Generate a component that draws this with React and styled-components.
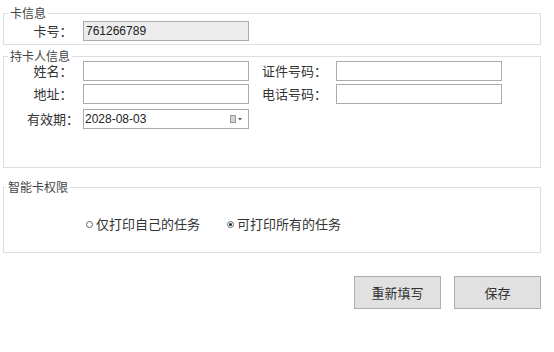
import React, { useState } from "react";
import styled, { createGlobalStyle } from "styled-components";

const GlobalStyle = createGlobalStyle`
  body {
    margin: 0;
    background: #fff;
    font-family: "Noto Sans CJK SC", "Noto Sans", sans-serif;
    color: #333;
  }
`;

const Page = styled.div`
  width: 554px;
  height: 352px;
  box-sizing: border-box;
  padding: 13px 0 0 3px;
  background: #fff;
`;

const Group = styled.div`
  width: 538px;
  box-sizing: border-box;
  border: 1px solid #dedede;
  margin-top: ${(p) => p.$gap || 0}px;
`;

const GroupTitle = styled.div`
  width: fit-content;
  margin: -7px 0 -5px ${(p) => p.$indent ?? 4}px;
  padding: 0 2px;
  background: #fff;
  font-size: 12px;
  line-height: 12px;
  height: 12px;
  color: #444;
`;

const GroupBody = styled.div`
  padding: ${(p) => p.$pad};
`;

const FormGrid = styled.div`
  display: grid;
  grid-template-columns: 60px 166px 87px 166px;
  grid-auto-rows: auto;
  row-gap: 3px;
`;

const Label = styled.div`
  font-size: 13px;
  line-height: 20px;
  height: 20px;
  text-align: center;
  white-space: nowrap;
  padding-left: ${(p) => (p.$wide ? 4 : 0)}px;
  color: #333;
`;

const TextInput = styled.input`
  width: 100%;
  height: 20px;
  box-sizing: border-box;
  margin: 0;
  border: 1px solid #ababab;
  padding: 0 2px;
  font-family: "Liberation Sans", Arial, sans-serif;
  font-size: 12px;
  color: #222;
  background: ${(p) => (p.readOnly ? "#ececec" : "#fff")};
  outline: none;
`;

const DateRow = styled.div`
  grid-column: 1 / 3;
  display: grid;
  grid-template-columns: 60px 166px;
  margin-top: 2px;
`;

const DateBox = styled.div`
  height: 20px;
  box-sizing: border-box;
  border: 1px solid #ababab;
  padding: 0 6px 0 1px;
  display: flex;
  align-items: center;
  justify-content: space-between;
  font-family: "Liberation Sans", Arial, sans-serif;
  font-size: 12px;
  color: #222;
`;

const RadioRow = styled.div`
  display: flex;
  align-items: center;
  gap: 27px;
  height: 14px;
`;

const RadioItem = styled.label`
  display: flex;
  align-items: center;
  gap: 3px;
  font-size: 13px;
  line-height: 14px;
  color: #333;
  cursor: pointer;
`;

const RadioDot = styled.span`
  width: 7px;
  height: 7px;
  box-sizing: border-box;
  border: 1px solid #666;
  border-radius: 50%;
  display: flex;
  align-items: center;
  justify-content: center;
  &::after {
    content: "";
    width: 3px;
    height: 3px;
    border-radius: 50%;
    background: ${(p) => (p.$checked ? "#222" : "transparent")};
  }
`;

const ButtonBar = styled.div`
  width: 538px;
  display: flex;
  justify-content: flex-end;
  gap: 13px;
  margin-top: 23px;
`;

const Button = styled.button`
  width: 87px;
  height: 33px;
  box-sizing: border-box;
  border: 1px solid #adadad;
  background: #e1e1e1;
  font-family: "Noto Sans CJK SC", sans-serif;
  font-size: 13px;
  color: #333;
  padding: 0;
  cursor: pointer;
`;

const CalendarIcon = () => (
  <svg width="12" height="8" viewBox="0 0 12 8">
    <rect x="0.5" y="0.5" width="5" height="7" fill="#d4d4d4" stroke="#9a9a9a" />
    <path d="M8 3h4l-2 2.5z" fill="#4a5a7a" />
  </svg>
);

export default function App() {
  const [scope, setScope] = useState("all");

  return (
    <Page>
      <GlobalStyle />
      <Group>
        <GroupTitle $indent={4}>卡信息</GroupTitle>
        <GroupBody $pad="7px 0 3px 19px">
          <FormGrid>
            <Label>卡号：</Label>
            <TextInput readOnly value="761266789" />
          </FormGrid>
        </GroupBody>
      </Group>

      <Group $gap={11}>
        <GroupTitle $indent={4}>持卡人信息</GroupTitle>
        <GroupBody $pad="4px 0 38px 19px">
          <FormGrid>
            <Label>姓名：</Label>
            <TextInput />
            <Label $wide>证件号码：</Label>
            <TextInput />
            <Label>地址：</Label>
            <TextInput />
            <Label $wide>电话号码：</Label>
            <TextInput />
            <DateRow>
              <Label>有效期：</Label>
              <DateBox>
                <span>2028-08-03</span>
                <CalendarIcon />
              </DateBox>
            </DateRow>
          </FormGrid>
        </GroupBody>
      </Group>

      <Group $gap={19}>
        <GroupTitle $indent={2}>智能卡权限</GroupTitle>
        <GroupBody $pad="29px 0 21px 82px">
          <RadioRow>
            <RadioItem onClick={() => setScope("own")}>
              <RadioDot $checked={scope === "own"} />
              仅打印自己的任务
            </RadioItem>
            <RadioItem onClick={() => setScope("all")}>
              <RadioDot $checked={scope === "all"} />
              可打印所有的任务
            </RadioItem>
          </RadioRow>
        </GroupBody>
      </Group>

      <ButtonBar>
        <Button>重新填写</Button>
        <Button>保存</Button>
      </ButtonBar>
    </Page>
  );
}
